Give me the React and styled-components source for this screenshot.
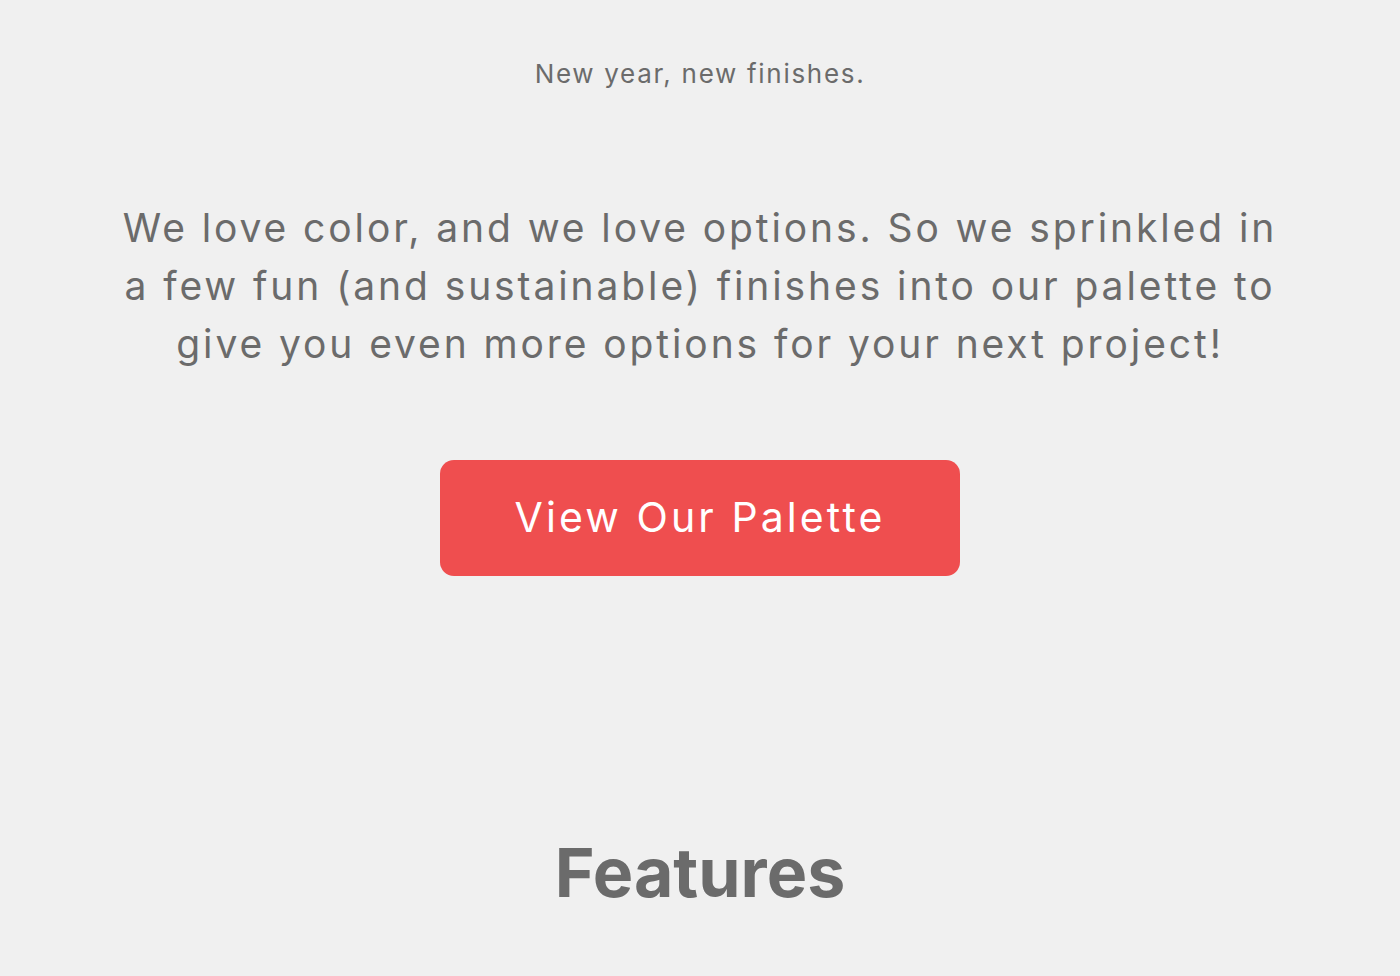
import React from 'react'
import styled, { createGlobalStyle } from 'styled-components'

const GlobalStyle = createGlobalStyle`
  html, body {
    margin:0;
    padding:0;
    background:#f0f0f0;
  }
  body {
    font-family:'Inter', 'Liberation Sans', sans-serif;
    color:#6b6b6b;
  }
`;

const Page = styled.main`
  min-height:976px;
  display:flex;
  flex-direction:column;
  align-items:center;
  text-align:center;
`;

const Hero = styled.section`
  display:flex;
  flex-direction:column;
  align-items:center;
  padding-top:55px;
`;

const Kicker = styled.p`
  margin:0;
  font-size:26px;
  line-height:38px;
  letter-spacing:1.7px;
`;

const Lead = styled.p`
  margin:106px 0 0;
  max-width:1184px;
  font-size:39px;
  line-height:58px;
  letter-spacing:2.9px;
`;

const Button = styled.a`
  margin-top:87px;
  width:520px;
  height:116px;
  display:flex;
  align-items:center;
  justify-content:center;
  padding-bottom:3px;
  box-sizing:border-box;
  background:#ef4e4f;
  border-radius:14px;
  color:#fff;
  font-size:41px;
  letter-spacing:3.1px;
  text-decoration:none;
  cursor:pointer;
`;

const Heading = styled.h2`
  margin:251px 0 0;
  font-size:68px;
  line-height:90px;
  font-weight:700;
  color:#6b6b6b;
`;

const App = () => {
  return (
    <Page>
      <GlobalStyle />
      <Hero>
        <Kicker>New year, new finishes.</Kicker>
        <Lead>
          We love color, and we love options. So we sprinkled in a few fun (and sustainable) finishes into our palette to give you even more options for your next project!
        </Lead>
        <Button>View Our Palette</Button>
      </Hero>
      <Heading>Features</Heading>
    </Page>
  )
}

export default App
